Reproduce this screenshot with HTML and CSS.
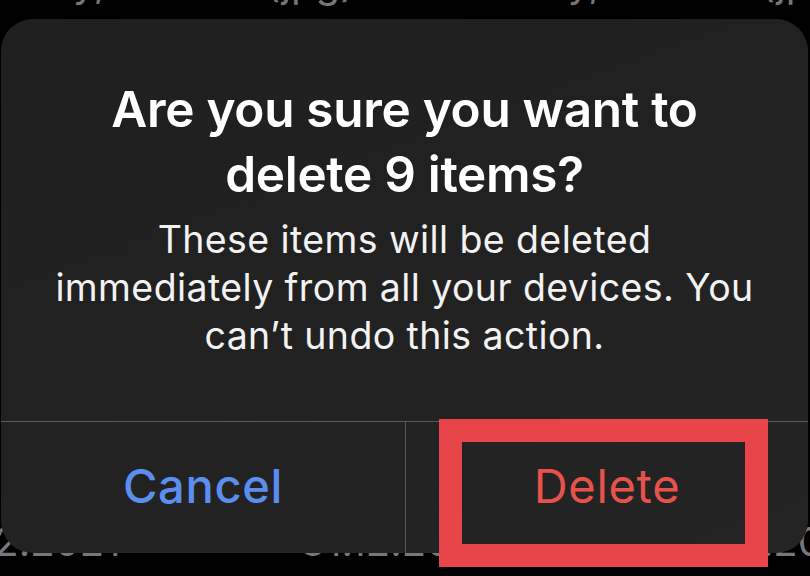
FILE: index.html
```html
<!DOCTYPE html>
<html lang="en">
<head>
  <meta charset="UTF-8">
  <title>Delete items</title>
  <link rel="stylesheet" href="styles.css">
</head>
<body>

  <div class="screen">
    <div class="list-row top">
      <span>Today, 9 items (jpg)</span>
      <span>Today, 9 items (jpg)</span>
    </div>
    <div class="list-row bottom">
      <span>12.2021</span>
      <span>31.12.2021</span>
      <span>31.12.2021</span>
    </div>
  </div>

  <div class="alert">
    <div class="alert-body">
      <h1>Are you sure you want to<br>delete 9 items?</h1>
      <p>These items will be deleted<br>immediately from all your devices. You<br>can’t undo this action.</p>
    </div>
    <div class="alert-actions">
      <button class="cancel">Cancel</button>
      <button class="delete">Delete</button>
    </div>
  </div>

  <div class="highlight"></div>

</body>
</html>
```

FILE: styles.css
```css
body {
  margin: 0;
  width: 810px;
  height: 576px;
  overflow: hidden;
  position: relative;
  background: #000;
  font-family: Inter, "Noto Sans", sans-serif;
}

.screen {
  height: 576px;
  display: flex;
  flex-direction: column;
  justify-content: space-between;
  overflow: hidden;
}

.list-row {
  display: flex;
  color: #77777b;
  font-size: 40px;
  white-space: nowrap;
}

.list-row.top {
  gap: 120px;
  margin-top: -42px;
  margin-left: -20px;
}

.list-row.bottom {
  gap: 180px;
  margin-bottom: 10px;
  margin-left: -22px;
}

.alert {
  position: absolute;
  left: 1px;
  top: 19px;
  width: 807px;
  height: 534px;
  border-radius: 32px;
  background: linear-gradient(160deg, #1f1f1f, #252424);
  display: flex;
  flex-direction: column;
  overflow: hidden;
}

.alert-body {
  height: 402px;
  box-sizing: border-box;
  padding-top: 58px;
  text-align: center;
  color: #fff;
}

.alert-body h1 {
  margin: 0;
  font-size: 49.5px;
  font-weight: 600;
  line-height: 65px;
  letter-spacing: -0.3px;
}

.alert-body p {
  margin: 9px 0 0;
  font-size: 37.5px;
  line-height: 48px;
  letter-spacing: 0.4px;
  color: #f2f2f2;
}

.alert-actions {
  flex: 1;
  display: grid;
  grid-template-columns: 404px 1fr;
  border-top: 1px solid #58585a;
}

.alert-actions button {
  background: none;
  border: none;
  font-family: inherit;
  font-size: 47px;
  letter-spacing: 0.7px;
  padding: 0 0 4px;
  cursor: pointer;
}

.cancel {
  color: #5a8ff0;
  font-weight: 500;
}

.delete {
  color: #e5534b;
  border-left: 1px solid #58585a !important;
}

.highlight {
  position: absolute;
  left: 439px;
  top: 419px;
  width: 283px;
  height: 102px;
  border: 23px solid #e8454b;
}
```
